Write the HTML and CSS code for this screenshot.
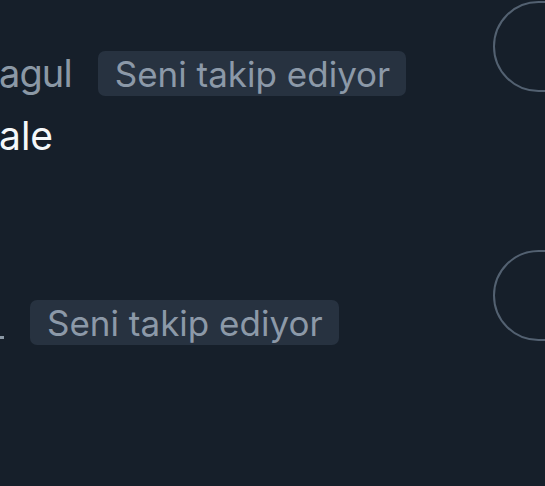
FILE: index.html
```html
<!DOCTYPE html>
<html lang="tr">
<head>
<meta charset="utf-8">
<link rel="stylesheet" href="styles.css">
</head>
<body>
<main class="list">
  <article class="item">
    <div class="info">
      <div class="meta">
        <span class="handle">agul</span>
        <span class="badge">Seni takip ediyor</span>
      </div>
      <p class="bio">ale</p>
    </div>
    <button class="follow" type="button" aria-label="Takip et"></button>
  </article>
  <article class="item">
    <div class="info">
      <div class="meta">
        <span class="handle handle-clip"><span>_</span></span>
        <span class="badge">Seni takip ediyor</span>
      </div>
    </div>
    <button class="follow" type="button" aria-label="Takip et"></button>
  </article>
</main>
</body>
</html>
```

FILE: styles.css
```css
html, body {
  margin: 0;
  padding: 0;
  background: #161f2a;
}
body {
  width: 545px;
  height: 486px;
  overflow: hidden;
  font-family: Inter, "Noto Sans", sans-serif;
}
.list {
  display: flex;
  flex-direction: column;
  padding-top: 1px;
}
.item {
  display: flex;
  align-items: flex-start;
  height: 249px;
}
.info {
  flex: 1;
  min-width: 0;
  display: flex;
  flex-direction: column;
  padding-top: 50px;
  margin-left: -1px;
}
.meta {
  display: flex;
  align-items: center;
  gap: 26px;
  height: 45px;
}
.handle {
  font-size: 38px;
  line-height: 45px;
  letter-spacing: -0.9px;
  color: #8b98a5;
  white-space: nowrap;
}
.handle-clip {
  width: 5px;
  overflow: hidden;
  display: flex;
  justify-content: flex-end;
}
.badge {
  display: inline-flex;
  align-items: center;
  height: 45px;
  padding: 0 16px 0 17px;
  border-radius: 7px;
  background: #273240;
  color: #8c99a8;
  font-size: 35px;
  white-space: nowrap;
}
.bio {
  margin: 16px 0 0;
  font-size: 39px;
  line-height: 48px;
  color: #f5f8fa;
}
.follow {
  flex-shrink: 0;
  width: 200px;
  height: 91px;
  margin-right: -148px;
  border: 2px solid #536171;
  border-radius: 46px;
  background: transparent;
  padding: 0;
}
```
